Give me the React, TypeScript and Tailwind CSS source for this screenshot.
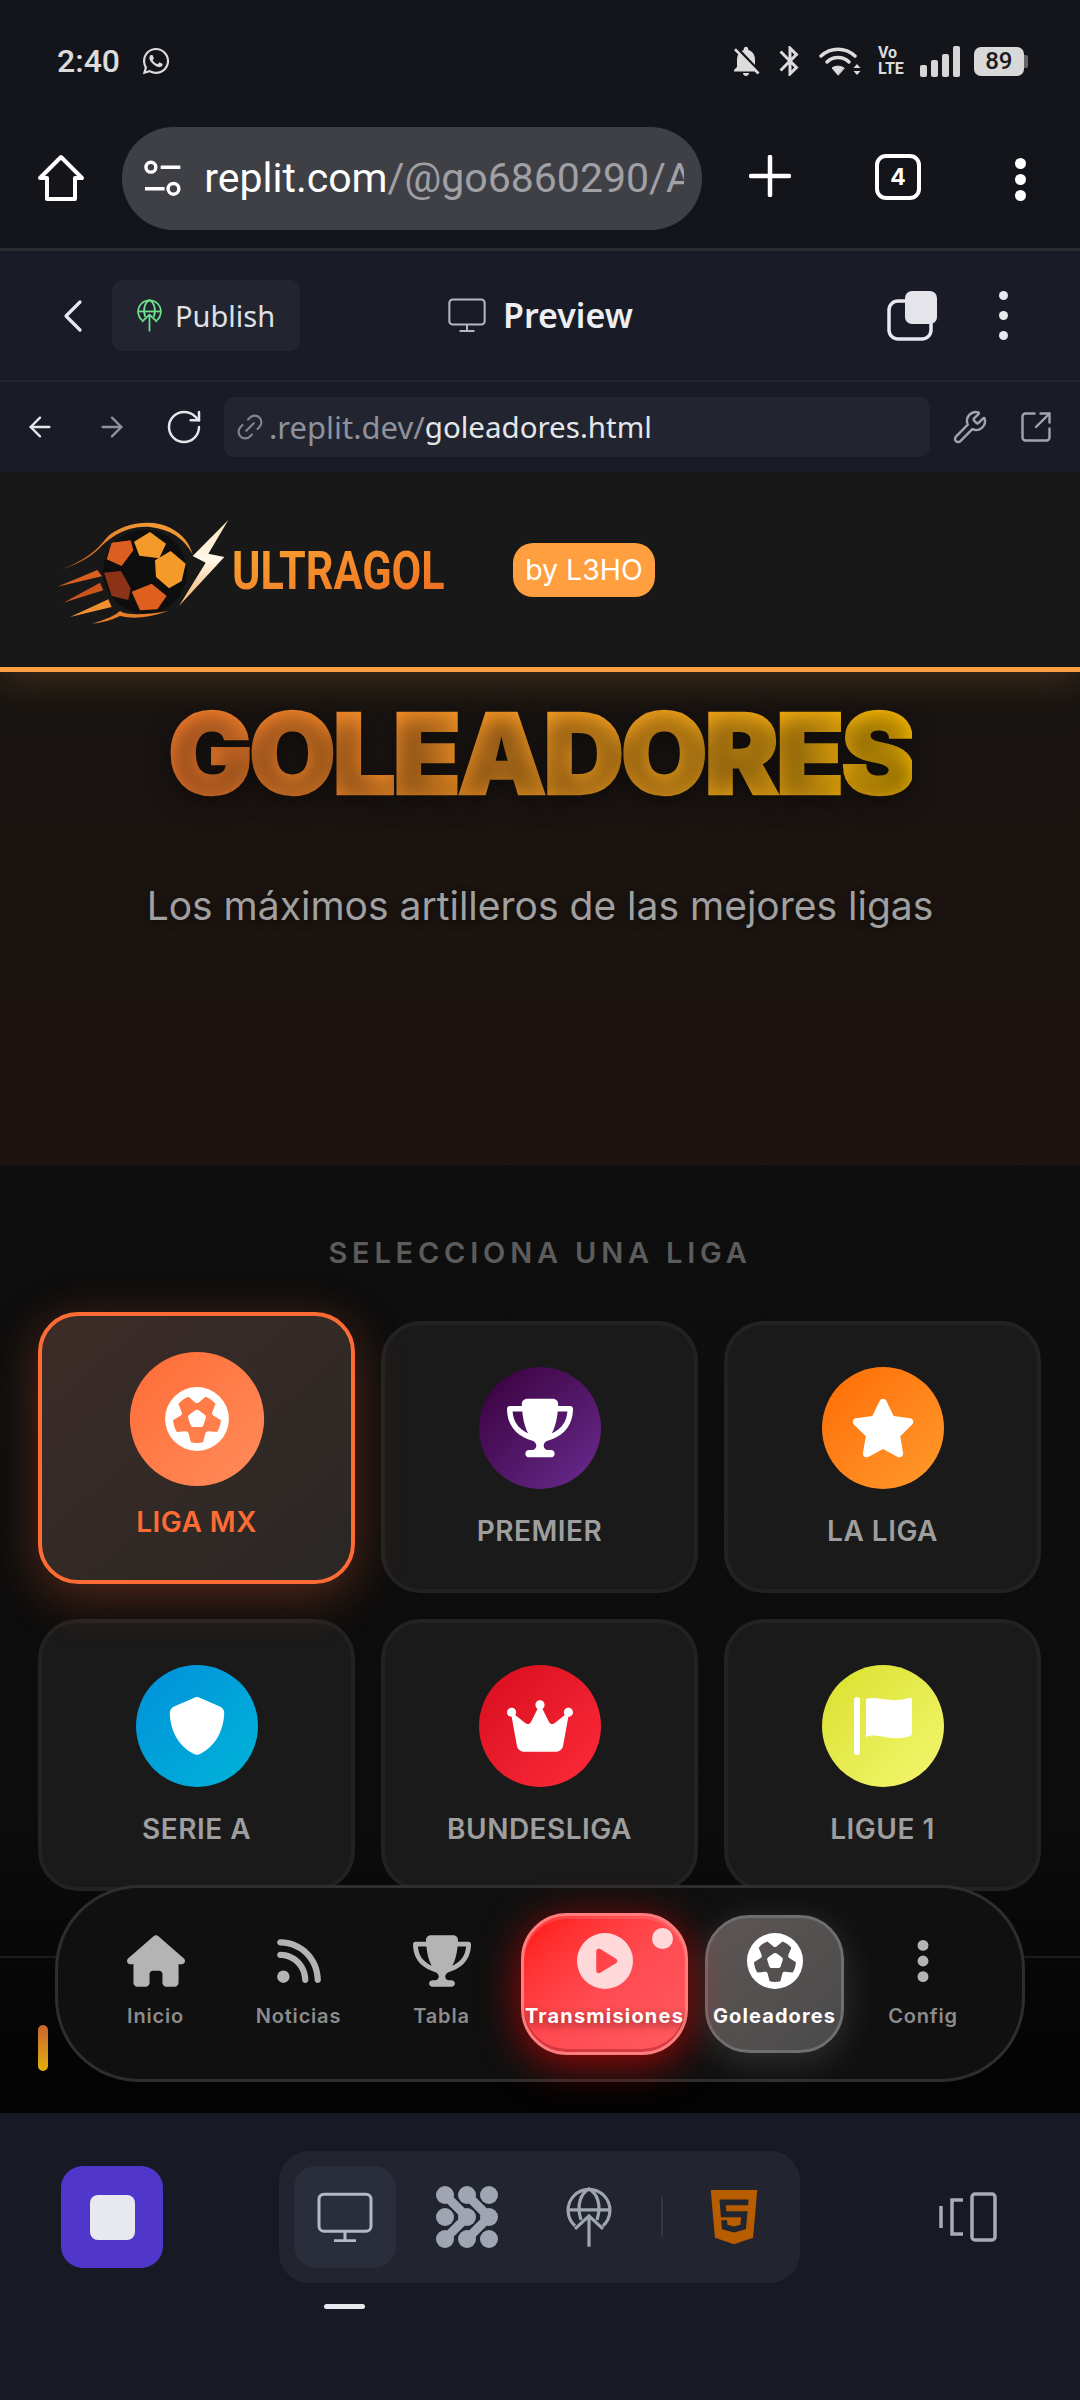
import type { ReactNode } from "react";
import { ArrowLeft, ArrowRight, ChevronLeft, Link2, RotateCw, SquareArrowOutUpRight, Wrench } from "lucide-react";
import { FaWhatsapp, FaHtml5 } from "react-icons/fa";
import { FaCirclePlay, FaCrown, FaEllipsisVertical, FaFutbol, FaHouse, FaRss, FaShield, FaStar, FaTrophy } from "react-icons/fa6";
import { MdNotificationsOff, MdBluetooth } from "react-icons/md";

function HomeOutline() {
  return (
    <svg width="48" height="48" viewBox="0 0 48 48" fill="none" stroke="white" strokeWidth="4" strokeLinejoin="round">
      <path d="M3 24 L24 3 L45 24 H38 V45 H10 V24 Z" />
    </svg>
  );
}

function TuneIcon() {
  return (
    <svg width="38" height="38" viewBox="0 0 38 38" fill="none" stroke="white" strokeWidth="3.5">
      <circle cx="7" cy="7" r="5" />
      <path d="M17 7 H37" />
      <path d="M1 29 H21" />
      <circle cx="30" cy="29" r="5.5" />
    </svg>
  );
}

function WifiIcon() {
  return (
    <svg width="44" height="30" viewBox="0 0 44 30" fill="none" stroke="#dcdcdc" strokeWidth="3.5" strokeLinecap="round">
      <path d="M2 10 C12 1 26 1 36 10" />
      <path d="M8 16 C14 10 24 10 30 16" />
      <path d="M19 29 L13 22 C16 19.5 22 19.5 25 22 Z" fill="#dcdcdc" strokeWidth="1" strokeLinejoin="round" />
      <path d="M36 18 L39.5 22 H32.5 Z M36 29 L32.5 25 H39.5 Z" fill="#dcdcdc" stroke="none" transform="translate(2 0)" />
    </svg>
  );
}

function MonitorIcon({ width, color }: { width: number; color: string }) {
  return (
    <svg width={width} height={width * 0.9} viewBox="0 0 56 50" fill="none" stroke={color} strokeWidth="3">
      <rect x="2" y="2" width="52" height="37" rx="5" />
      <path d="M28 39 V48 M17 48.5 H39" />
    </svg>
  );
}

function GlobeUp({ size, color }: { size: number; color: string }) {
  return (
    <svg width={size} height={size * 1.3} viewBox="0 0 46 60" fill="none" stroke={color} strokeWidth="3.2">
      <path d="M9 39 A21 21 0 1 1 37 39" />
      <path d="M2 23 H44" />
      <path d="M15 33 C10 18 15 6 23 2 C31 6 36 18 31 33" />
      <path d="M23 60 V29 M9 42 L23 29 L37 42" />
    </svg>
  );
}

function BlobsIcon() {
  const dots = [9, 31, 53].flatMap((y) => [9, 31, 53].map((x) => [x, y]));
  return (
    <svg width="62" height="62" viewBox="0 0 62 62" fill="#a0a6b1" stroke="#a0a6b1">
      {dots.map(([x, y]) => (
        <circle key={`${x}-${y}`} cx={x} cy={y} r="9" stroke="none" />
      ))}
      <path strokeWidth="9" fill="none" d="M9 9 L31 31 L9 53 M31 9 L53 31 L31 53" />
    </svg>
  );
}

function DeviceIcon() {
  return (
    <svg width="58" height="50" viewBox="0 0 58 50" fill="none" stroke="#a7abb5" strokeWidth="3.5">
      <rect x="33" y="2" width="23" height="46" rx="3" />
      <path d="M24 8 H13 V42 H24" />
      <path d="M2 14 V36" />
    </svg>
  );
}

function CopyLikeIcon() {
  return (
    <svg width="50" height="50" viewBox="0 0 50 50" fill="none">
      <rect x="2" y="10" width="42" height="38" rx="9" stroke="#e8e8ee" strokeWidth="3.5" />
      <rect x="18" y="0" width="32" height="33" rx="7" fill="#e4e4ea" />
    </svg>
  );
}

// pole and waving cloth are separate in the reference, the fa6 flag joins them
function FlagIcon() {
  return (
    <svg width="60" height="60" viewBox="0 0 60 60" fill="white">
      <rect x="1" y="1" width="6" height="58" rx="3" />
      <path d="M13 3 C24 -1 36 8 56 2 C58 1.5 59 2.5 59 4 V37 C59 39 58 40 56 40.5 C36 46 24 36 13 41 Z" />
    </svg>
  );
}

function UltragolBall() {
  return (
    <svg width="190" height="130" viewBox="0 0 570 390" className="shrink-0">
      <defs>
        <linearGradient id="swoosh" x1="0" y1="1" x2="1" y2="0">
          <stop offset="0" stopColor="#d9601f" />
          <stop offset="1" stopColor="#f6a33a" />
        </linearGradient>
        <linearGradient id="bolt" x1="0" y1="0" x2="0" y2="1">
          <stop offset="0" stopColor="#fde3b8" />
          <stop offset="0.45" stopColor="#fff8ea" />
          <stop offset="1" stopColor="#f4b060" />
        </linearGradient>
      </defs>
      <circle cx="315" cy="212" r="126" fill="#0e0e0e" />
      <path fill="url(#swoosh)" d="M65 205 C130 180 170 150 200 110 C240 70 330 50 390 80 C430 100 450 130 458 160 C430 110 390 85 330 78 C260 72 210 110 180 140 C150 170 110 190 65 205Z" />
      <path fill="#d9601f" d="M52 257 L172 207 L186 226 Z" />
      <path fill="#c9541c" d="M70 305 L180 245 L190 268 Z" />
      <path fill="#f09030" d="M90 348 L205 295 L215 318 Z" />
      <path fill="#e87d28" d="M155 368 Q220 350 240 330 Q270 350 385 330 Q300 360 240 345 Q200 365 155 368Z" />
      <polygon fill="#f39a2a" points="282,122 330,93 378,128 358,172 298,164" />
      <polygon fill="#f59b2a" points="345,178 392,150 437,188 425,240 387,262 348,228" />
      <polygon fill="#dc5f20" points="200,175 215,125 272,118 280,148 245,195" />
      <polygon fill="#8c3216" points="192,215 243,210 272,262 265,297 215,285" />
      <polygon fill="#e0601f" points="275,272 335,248 380,285 352,325 300,328" />
      <path fill="url(#bolt)" d="M565 57 L458 165 L497 185 L417 315 L553 168 L505 158 Z" />
    </svg>
  );
}

const leagues = [
  { name: "LIGA MX", icon: <FaFutbol size={58} />, circle: "bg-gradient-to-br from-[#ff6b35] to-[#ff8c5a]", active: true },
  { name: "PREMIER", icon: <FaTrophy size={66} />, circle: "bg-gradient-to-br from-[#38003c] to-[#6a2c91]" },
  { name: "LA LIGA", icon: <FaStar size={66} />, circle: "bg-gradient-to-br from-[#ff6b00] to-[#ff9a2a]" },
  { name: "SERIE A", icon: <FaShield size={58} />, circle: "bg-gradient-to-br from-[#0090da] to-[#00b4d8]" },
  { name: "BUNDESLIGA", icon: <FaCrown size={66} />, circle: "bg-gradient-to-br from-[#d60a1c] to-[#ff2a3a]" },
  { name: "LIGUE 1", icon: <FlagIcon />, circle: "bg-gradient-to-br from-[#dae025] to-[#f4f76e]" },
];

function LeagueCard({ name, icon, circle, active }: { name: string; icon: ReactNode; circle: string; active?: boolean }) {
  return (
    <div
      className={
        active
          ? "h-[272px] rounded-[40px] border-4 border-[#ff6b35] bg-gradient-to-br from-[#3c2c27] to-[#2a2725] -translate-y-[9px] shadow-[0_12px_50px_rgba(255,107,53,0.3)] flex flex-col items-center pt-[42px]"
          : "h-[272px] rounded-[40px] border-4 border-[#222222] bg-[#1a1a1a] flex flex-col items-center pt-[42px]"
      }
    >
      <div className={`w-[122px] h-[122px] rounded-full flex items-center justify-center text-white ${circle} ${active ? "scale-110" : ""}`}>
        {icon}
      </div>
      <span className={`mt-[24px] text-[28px] leading-[36px] font-semibold tracking-[0.5px] ${active ? "text-[#ff6b35]" : "text-[#9e9e9e]"}`}>
        {name}
      </span>
    </div>
  );
}

function NavItem({ label, icon, width }: { label: string; icon: ReactNode; width: string }) {
  return (
    <div className={`${width} h-[142px] shrink-0 flex flex-col items-center pt-[20px]`}>
      <div className="h-[56px] flex items-center justify-center text-[#b4b4b4]">{icon}</div>
      <span className="mt-[15px] text-[20px] leading-[24px] font-semibold tracking-[0.8px] text-[#8c8c8c]">{label}</span>
    </div>
  );
}

function BottomNav() {
  return (
    <nav className="absolute left-[55px] right-[55px] bottom-[31px] h-[197px] rounded-[84px] border-[3px] border-[#2e2e2e] bg-[#111111]/95 flex items-center pl-[26px]">
      <NavItem width="w-[143px]" label="Inicio" icon={<FaHouse size={58} />} />
      <NavItem width="w-[143px]" label="Noticias" icon={<FaRss size={50} />} />
      <NavItem width="w-[143px]" label="Tabla" icon={<FaTrophy size={58} />} />
      <div className="relative ml-[8px] w-[167px] h-[142px] shrink-0 rounded-[46px] border-[3px] border-[#ff7d7d] bg-gradient-to-br from-[#ff0f0f] via-[#ff4a50] to-[#ff5a60] shadow-[0_8px_40px_rgba(255,0,0,0.6),inset_0_-3px_0_rgba(160,30,40,0.45),inset_0_3px_0_rgba(255,255,255,0.12)] flex flex-col items-center pt-[17px]">
        <div className="h-[56px] flex items-center justify-center text-[#ffd9d9]">
          <FaCirclePlay size={56} />
        </div>
        <span className="mt-[15px] text-[20px] leading-[24px] font-bold tracking-[1.2px] text-white whitespace-nowrap [text-shadow:0_3px_8px_rgba(0,0,0,0.45)]">
          Transmisiones
        </span>
        <span className="absolute right-[12px] top-[12px] w-[21px] h-[21px] rounded-full bg-[#ffd9d9]" />
      </div>
      <div className="ml-[17px] w-[139px] h-[138px] shrink-0 rounded-[44px] border-[3px] border-[#6f6f6f] bg-gradient-to-br from-[#5e5656] to-[#4a4a4a] shadow-[0_8px_36px_rgba(255,255,255,0.14)] flex flex-col items-center pt-[15px]">
        <div className="h-[56px] flex items-center justify-center text-white">
          <FaFutbol size={56} />
        </div>
        <span className="mt-[15px] text-[20px] leading-[24px] font-bold tracking-[1.1px] text-white">Goleadores</span>
      </div>
      <NavItem width="w-[158px]" label="Config" icon={<FaEllipsisVertical size={50} />} />
    </nav>
  );
}

export default function App() {
  return (
    <div className="w-[1080px] h-[2400px] flex flex-col overflow-hidden bg-[#13151b] font-['Inter',sans-serif]">
      {/* android status bar */}
      <div className="h-[124px] shrink-0 flex items-center pb-[2px] pl-[57px] text-[#dcdcdc]">
        <span className="text-[32px] font-medium font-['Roboto',sans-serif]">2:40</span>
        <FaWhatsapp size={30} className="ml-[21px]" />
        <MdNotificationsOff size={36} className="ml-[557px]" />
        <MdBluetooth size={36} className="ml-[8px]" />
        <div className="ml-[11px]">
          <WifiIcon />
        </div>
        <div className="ml-[15px] flex flex-col text-[16px] leading-[16px] font-bold font-['Roboto',sans-serif]">
          <span>Vo</span>
          <span>LTE</span>
        </div>
        <div className="ml-[16px] flex items-end gap-[4px] h-[32px]">
          <span className="w-[7px] h-[12px] bg-[#d6d6d6] rounded-[2px]" />
          <span className="w-[7px] h-[17px] bg-[#d6d6d6] rounded-[2px]" />
          <span className="w-[7px] h-[23px] bg-[#d6d6d6] rounded-[2px]" />
          <span className="w-[7px] h-[31px] bg-[#d6d6d6] rounded-[2px]" />
        </div>
        <div className="ml-[14px] w-[50px] h-[29px] rounded-[7px] bg-[#d8d8d8] text-[#1a1a1a] text-[24px] leading-[29px] font-medium text-center font-['Roboto',sans-serif]">89</div>
        <span className="w-[4px] h-[13px] bg-[#666] rounded-r-[2px]" />
      </div>

      {/* chrome toolbar */}
      <div className="h-[127px] shrink-0 flex items-start pl-[37px] border-b-[3px] border-[#2a2b30]">
        <div className="mt-[30px]">
          <HomeOutline />
        </div>
        <div className="ml-[37px] mt-[3px] w-[580px] h-[103px] rounded-[52px] bg-[#3f4046] flex items-center pl-[22px] pr-[18px] overflow-hidden">
          <TuneIcon />
          <div className="ml-[23px] text-[41px] font-['Roboto',sans-serif] whitespace-nowrap overflow-hidden">
            <span className="text-white">replit.com</span>
            <span className="text-[#a0a0a5]">/@go6860290/A</span>
          </div>
        </div>
        <svg width="42" height="42" viewBox="0 0 42 42" stroke="white" strokeWidth="4.5" strokeLinecap="round" className="ml-[47px] mt-[31px]">
          <path d="M21 2 V40 M2 21 H40" />
        </svg>
        <div className="ml-[84px] mt-[30px] w-[46px] h-[46px] rounded-[11px] border-[4px] border-white text-white text-[23px] leading-[38px] font-bold text-center">4</div>
        <div className="ml-[94px] mt-[34px] flex flex-col gap-[5px]">
          <span className="w-[11px] h-[11px] rounded-full bg-white" />
          <span className="w-[11px] h-[11px] rounded-full bg-white" />
          <span className="w-[11px] h-[11px] rounded-full bg-white" />
        </div>
      </div>

      {/* replit header */}
      <div className="h-[131px] shrink-0 bg-[#191c26] border-b-2 border-[#23262f] flex items-center pl-[53px] font-['Noto_Sans',sans-serif]">
        <ChevronLeft size={56} strokeWidth={1.4} className="text-[#e8e8ee] -ml-[8px] -mr-[4px]" />
        <div className="ml-[15px] w-[188px] h-[71px] rounded-[10px] bg-[#22252f] flex items-center pl-[25px]">
          <GlobeUp size={25} color="#6fe08c" />
          <span className="ml-[13px] text-[29px] text-[#dfe1e6]">Publish</span>
        </div>
        <div className="ml-[148px]">
          <MonitorIcon width={38} color="#b4b8c2" />
        </div>
        <span className="ml-[17px] text-[34px] font-semibold text-[#eceef2]">Preview</span>
        <div className="ml-[254px]">
          <CopyLikeIcon />
        </div>
        <div className="ml-[62px] flex flex-col gap-[11px]">
          <span className="w-[9px] h-[9px] rounded-full bg-[#e8e8ee]" />
          <span className="w-[9px] h-[9px] rounded-full bg-[#e8e8ee]" />
          <span className="w-[9px] h-[9px] rounded-full bg-[#e8e8ee]" />
        </div>
      </div>

      {/* replit url row */}
      <div className="h-[90px] shrink-0 bg-[#191c26] flex items-center pl-[24px] font-['Noto_Sans',sans-serif]">
        <ArrowLeft size={32} strokeWidth={1.8} className="text-[#e4e6ea]" />
        <ArrowRight size={32} strokeWidth={1.8} className="ml-[40px] text-[#8e929c]" />
        <RotateCw size={40} strokeWidth={1.5} className="ml-[36px] text-[#e4e6ea]" />
        <div className="ml-[20px] w-[706px] h-[60px] rounded-[10px] bg-[#22252f] flex items-center pl-[10px]">
          <Link2 size={32} strokeWidth={1.6} className="text-[#80858f] -rotate-45" />
          <span className="ml-[3px] text-[31px] text-[#8e929c]">.replit.dev/</span>
          <span className="text-[29.5px] text-[#e4e6ea]">goleadores.html</span>
        </div>
        <Wrench size={36} strokeWidth={1.6} className="ml-[22px] text-[#a0a4ae]" />
        <SquareArrowOutUpRight size={36} strokeWidth={1.6} className="ml-[30px] text-[#a0a4ae]" />
      </div>

      {/* preview page */}
      <div className="relative flex-1 overflow-hidden flex flex-col bg-[#0d0d0d]">
        <header className="relative z-10 h-[200px] shrink-0 bg-[#181818] border-b-[5px] border-[#ff9f40] shadow-[0_6px_36px_rgba(255,159,64,0.2)] flex items-center pl-[40px]">
          <div className="-mt-[8px]">
            <UltragolBall />
          </div>
          <div className="w-[212px] ml-[2px] mr-[69px] pt-[2px]">
            <span className="inline-block origin-left scale-x-[0.8] text-[54px] leading-[60px] font-bold font-['Roboto',sans-serif] bg-gradient-to-br from-[#f8a532] to-[#ee6a20] bg-clip-text text-transparent whitespace-nowrap">
              ULTRAGOL
            </span>
          </div>
          <span className="w-[142px] h-[54px] rounded-[20px] bg-[#ff9f40] text-white text-[28.5px] leading-[54px] text-center">by L3HO</span>
        </header>

        <section className="h-[493px] shrink-0 bg-gradient-to-b from-[#181412] to-[#1e130e] flex flex-col items-center pt-[14px]">
          <h1 className="text-[112px] leading-[134px] font-black tracking-[-3.4px] bg-gradient-to-r from-[#ff8030] to-[#ffc000] bg-clip-text text-transparent [-webkit-text-stroke:2.5px_transparent] [text-shadow:0_6px_24px_rgba(0,0,0,0.5)]">
            GOLEADORES
          </h1>
          <p className="mt-[62px] text-[39px] leading-[48px] text-[#a0a0a0] [text-shadow:0_2px_8px_rgba(0,0,0,0.5)]">
            Los máximos artilleros de las mejores ligas
          </p>
        </section>

        <section className="flex-1 bg-gradient-to-b from-[#0e0e0e] via-[#0c0c0c] via-70% to-[#030303]">
          <h2 className="mt-[70px] text-center text-[29px] leading-[36px] font-semibold tracking-[4.8px] text-[#5c5c5c]">
            SELECCIONA UNA LIGA
          </h2>
          <div className="mt-[50px] pl-[38px] pr-[39px] grid grid-cols-3 gap-x-[26px] gap-y-[26px]">
            {leagues.map((l) => (
              <LeagueCard key={l.name} {...l} />
            ))}
          </div>
          <div className="mt-[65px] border-t-2 border-[#1c1c1c] pt-[67px] pl-[38px]">
            <div className="w-[10px] h-[46px] rounded-full bg-gradient-to-b from-[#c8642a] to-[#e0b000]" />
          </div>
        </section>

        <BottomNav />
      </div>

      {/* replit bottom bar */}
      <div className="h-[287px] shrink-0 bg-[#171a24] flex items-start pl-[61px] pt-[38px]">
        <div className="mt-[15px] w-[102px] h-[102px] rounded-[22px] bg-[#5136cc] flex items-center justify-center">
          <span className="w-[45px] h-[45px] rounded-[8px] bg-[#e8e8ef]" />
        </div>
        <div className="ml-[116px] flex flex-col items-start">
          <div className="w-[521px] h-[132px] rounded-[30px] bg-[#22252f] flex items-center pl-[15px]">
            <div className="w-[102px] h-[102px] rounded-[22px] bg-[#2a2d3a] flex items-center justify-center">
              <MonitorIcon width={56} color="#b4b8c2" />
            </div>
            <div className="ml-[40px]">
              <BlobsIcon />
            </div>
            <div className="ml-[68px]">
              <GlobeUp size={46} color="#a0a6b1" />
            </div>
            <span className="ml-[49px] w-[2px] h-[40px] bg-[#343742]" />
            <FaHtml5 size={62} className="ml-[40px] text-[#b85c00]" />
          </div>
          <span className="ml-[45px] mt-[21px] w-[41px] h-[5px] rounded-full bg-[#e8e8ef]" />
        </div>
        <div className="ml-[139px] mt-[41px]">
          <DeviceIcon />
        </div>
      </div>
    </div>
  );
}
